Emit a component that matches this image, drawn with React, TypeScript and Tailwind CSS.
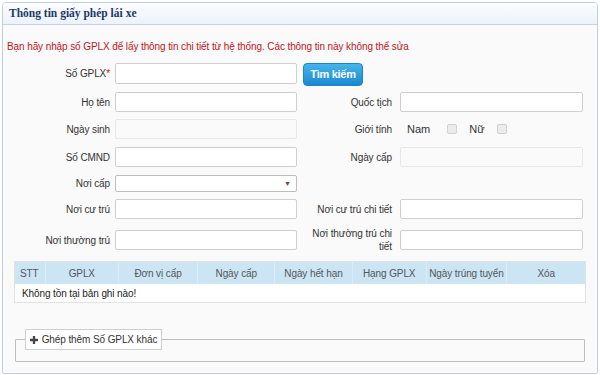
import React from "react";

const txt = "text-[10px] tracking-[-0.1px]";
const labelL = `pr-[5px] text-right ${txt} leading-[13px] text-[#333]`;
const labelR = `pr-[8px] text-right ${txt} leading-[13px] text-[#333]`;
const input = "h-[20px] w-full rounded-[2px] border border-[#cfcfcf] bg-white";
const inputOff = "h-[20px] w-full rounded-[2px] border border-[#e8e8e8] bg-[#fafafa]";

const columns = [
  { label: "STT", w: "w-[31px]", left: true },
  { label: "GPLX", w: "w-[73px]" },
  { label: "Đơn vị cấp", w: "w-[80px]" },
  { label: "Ngày cấp", w: "w-[77px]" },
  { label: "Ngày hết hạn", w: "w-[78px]" },
  { label: "Hạng GPLX", w: "w-[74px]" },
  { label: "Ngày trúng tuyển", w: "w-[81px]" },
  { label: "Xóa", w: "w-[78px]" },
];

const Row: React.FC<{ className?: string; children: React.ReactNode }> = ({ className, children }) => (
  <div className={`grid grid-cols-[112px_182px_103px_183px] items-center ${className ?? ""}`}>{children}</div>
);

const Checkbox = () => (
  <span className="inline-block h-[10px] w-[10px] rounded-[2px] border border-[#d0d0d0] bg-[#ececec]" />
);

export default function App() {
  return (
    <div
      className="h-[375px] w-[600px] overflow-hidden bg-white p-[2px]"
      style={{ fontFamily: '"Liberation Sans", Arial, sans-serif' }}
    >
      <div className="h-[372px] overflow-hidden rounded-t-[4px] rounded-b-[2px] border border-[#c2cedd] bg-[#fafafa]">
        {/* Header */}
        <div className="flex h-[22px] items-center border-b border-[#c5d2e2] bg-gradient-to-b from-[#fbfdff] to-[#ecf3fb] pl-[6px]">
          <span
            className="text-[11.5px] font-bold text-[#1f3769]"
            style={{ fontFamily: '"Liberation Serif", "Times New Roman", serif' }}
          >
            Thông tin giấy phép lái xe
          </span>
        </div>

        {/* Body */}
        <div className="pt-[15px]">
          <p className={`pl-[4px] ${txt} leading-[13px] text-[#c0151b]`}>
            Bạn hãy nhập số GPLX để lấy thông tin chi tiết từ hệ thống. Các thông tin này không thể sửa
          </p>

          <Row className="mt-[8px] h-[23px]">
            <label className={labelL}>
              Số GPLX<span className="text-[#e00000]">*</span>
            </label>
            <input className="h-[21px] w-full rounded-[2px] border border-[#cfcfcf] bg-white" />
            <div className="pl-[6px]">
              <button className="h-[23px] w-[60px] rounded-[4px] border border-[#1c86c8] bg-gradient-to-b from-[#45b5ea] to-[#1a88cf] text-[11px] font-bold tracking-[-0.3px] text-white">
                Tìm kiếm
              </button>
            </div>
            <div />
          </Row>

          <Row className="mt-[8px] h-[20px]">
            <label className={labelL}>Họ tên</label>
            <input className={input} />
            <label className={labelR}>Quốc tịch</label>
            <input className={input} />
          </Row>

          <Row className="mt-[7px] h-[20px]">
            <label className={labelL}>Ngày sinh</label>
            <input className={inputOff} disabled />
            <label className={labelR}>Giới tính</label>
            <div className="flex items-center pl-[7px] text-[11px] text-[#333]">
              <span>Nam</span>
              <span className="ml-[17px] flex"><Checkbox /></span>
              <span className="ml-[12px]">Nữ</span>
              <span className="ml-[12px] flex"><Checkbox /></span>
            </div>
          </Row>

          <Row className="mt-[8px] h-[20px]">
            <label className={labelL}>Số CMND</label>
            <input className={input} />
            <label className={labelR}>Ngày cấp</label>
            <input className={inputOff} disabled />
          </Row>

          <Row className="mt-[8px] h-[17px]">
            <label className={labelL}>Nơi cấp</label>
            <div className="flex h-[17px] items-center justify-end rounded-[2px] border border-[#bdbdbd] bg-white pr-[5px]">
              <span className="text-[7px] leading-none text-[#555]">▼</span>
            </div>
            <div />
            <div />
          </Row>

          <Row className="mt-[7px] h-[20px]">
            <label className={labelL}>Nơi cư trú</label>
            <input className={input} />
            <label className={labelR}>Nơi cư trú chi tiết</label>
            <input className={input} />
          </Row>

          <Row className="mt-[8px] h-[20px]">
            <label className={labelL}>Nơi thường trú</label>
            <input className={input} />
            <label className={`${labelR} pl-[8px] leading-[12px]`}>Nơi thường trú chi tiết</label>
            <input className={input} />
          </Row>

          {/* Table */}
          <div className="ml-[11px] mt-[14px] w-[572px] border border-[#e2e2e2] bg-white">
            <div className={`flex h-[22px] bg-[#cbe5f5] ${txt} text-[#555]`}>
              {columns.map((c, i) => (
                <div
                  key={c.label}
                  className={`${c.w} flex items-center whitespace-nowrap ${c.left ? "pl-[5px]" : "justify-center"} ${
                    i < columns.length - 1 ? "border-r border-[#d9edf9]" : ""
                  }`}
                >
                  {c.label}
                </div>
              ))}
            </div>
            <div className={`flex h-[18px] items-center pl-[7px] ${txt} text-[#222]`}>
              Không tồn tại bản ghi nào!
            </div>
          </div>

          {/* Fieldset */}
          <fieldset className="ml-[12px] mt-[26px] w-[570px] rounded-[1px] border border-[#bdbdbd]">
            <legend className="ml-[9px] p-0">
              <div
                className={`flex h-[21px] w-[137px] items-center justify-center gap-[4px] whitespace-nowrap border border-[#cfcfcf] bg-white ${txt} text-[#333]`}
              >
                <svg width="8" height="8" viewBox="0 0 9 9">
                  <path d="M3.2 0h2.6v3.2H9v2.6H5.8V9H3.2V5.8H0V3.2h3.2z" fill="#444" />
                </svg>
                <span>Ghép thêm Số GPLX khác</span>
              </div>
            </legend>
            <div className="h-[11px]" />
          </fieldset>
        </div>
      </div>
    </div>
  );
}
